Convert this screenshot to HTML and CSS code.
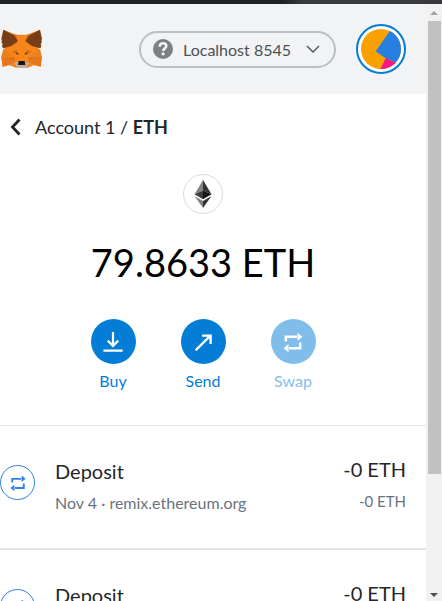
FILE: index.html
```html
<!DOCTYPE html>
<html lang="en">
<head>
<meta charset="utf-8">
<meta name="viewport" content="width=device-width, initial-scale=1">
<title>Account 1 / ETH</title>
<link rel="stylesheet" href="styles.css">
</head>
<body>
<svg class="defs" aria-hidden="true">
  <symbol id="swap" viewBox="0 0 20 20">
    <path d="M2.8 9.5V4.8H14" fill="none" stroke="currentColor" stroke-width="2.4"/>
    <path d="M14.5 .7 19.5 4.8 14.5 8.9z" fill="currentColor"/>
    <path d="M17.2 10.5v5.7H6" fill="none" stroke="currentColor" stroke-width="2.4"/>
    <path d="M5.5 12.1.5 16.2l5 4z" fill="currentColor"/>
  </symbol>
</svg>
<div class="window-edge"></div>
<div class="shell">
  <div class="page">
    <header class="header">
      <svg class="fox" viewBox="3 87 123 120" role="img" aria-label="Wallet logo">
        <path d="M44 104h42l19 22 12 22 8 22-3 30-20-4-20 7H48l-20-7-20 4-4-30 8-22 12-22z" fill="#f6851b"/>
        <path d="m10 89 39 15 5 20zM120 89 81 104l-5 20z" fill="#e2761b"/>
        <path d="m10 89 34 18 10 17-20 14-25 7-3-7 2-6-4-5 2-4-2-7z" fill="#763d16"/>
        <path d="m120 89-34 18-10 17 20 14 25 7 3-7-2-6 4-5-2-4 2-7z" fill="#763d16"/>
        <path d="m10 147-6 25h21l9-8zM120 147l6 25h-21l-9-8z" fill="#e8801f"/>
        <path d="M4 172h24l10 17-30 11zM126 172h-24l-10 17 30 11z" fill="#e4761b"/>
        <path d="m28 172 17-1-3 18zM102 172l-17-1 3 18z" fill="#dc701a"/>
        <path d="m35 155 15-5 7 13zM95 155l-15-5-7 13z" fill="#d96a1b"/>
        <path d="m45 158 9 1 1 6zM85 158l-9 1-1 6z" fill="#233447"/>
        <path d="m41 189 14-4h20l14 4-14 15H55z" fill="#c0ad9e"/>
        <path d="M56 183h18l2 12H54z" fill="#161616"/>
      </svg>
      <div class="header-tools">
        <button class="network" type="button">
          <svg class="network-help" viewBox="0 0 20 20" aria-hidden="true">
            <circle cx="10" cy="10" r="10" fill="#7c8084"/>
            <path d="M6.7 7.7C6.8 5.5 8 4.3 10 4.3s3.3 1.2 3.3 2.8c0 2-3.1 2.2-3.1 4.9" fill="none" stroke="#f2f3f4" stroke-width="2.6"/>
            <circle cx="10.1" cy="14.9" r="1.6" fill="#f2f3f4"/>
          </svg>
          <span>Localhost 8545</span>
          <svg class="network-chevron" viewBox="0 0 14 8" aria-hidden="true"><path d="m1 1 6 6 6-6" fill="none" stroke="#4d5156" stroke-width="1.4"/></svg>
        </button>
        <button class="avatar" type="button" aria-label="Account menu">
          <svg viewBox="0 0 120 120" aria-hidden="true">
            <clipPath id="disc"><circle cx="60" cy="60" r="60"/></clipPath>
            <g clip-path="url(#disc)">
              <path d="M0 0h120v120H0z" fill="#f8a100"/>
              <path d="M91 0 44 67l30 21 46 21V0z" fill="#2580e2"/>
              <path d="m74 88 46 21v20H54z" fill="#fc1683"/>
            </g>
          </svg>
        </button>
      </div>
    </header>
    <nav class="crumbs">
      <button class="back" type="button" aria-label="Back"><svg viewBox="0 0 11 18" aria-hidden="true"><path d="M9.5 1.5 2.5 9l7 7.5" fill="none" stroke="#1f2329" stroke-width="2.8"/></svg></button>
      <span><a href="#account">Account 1</a> / <b>ETH</b></span>
    </nav>
    <main>
      <section class="overview">
        <span class="token">
          <svg viewBox="0 0 18 28" aria-hidden="true">
            <path d="M9 0 .5 14.2 9 10.5z" fill="#828384"/>
            <path d="m9 0 8.5 14.2L9 10.5z" fill="#343434"/>
            <path d="M.5 14.2 9 10.4v8.8z" fill="#3c3c3b"/>
            <path d="M17.5 14.2 9 10.4v8.8z" fill="#141414"/>
            <path d="M.5 16 9 21v7z" fill="#828384"/>
            <path d="M17.5 16 9 21v7z" fill="#343434"/>
          </svg>
        </span>
        <h1 class="balance">79.8633 ETH</h1>
        <div class="actions">
          <button class="action" type="button">
            <span class="action-disc"><svg viewBox="0 0 24 24" aria-hidden="true"><path d="M12 1v15M6.3 10.5 12 16.2l5.7-5.7M1.5 21.5h21" fill="none" stroke="currentColor" stroke-width="2.4"/></svg></span>
            Buy
          </button>
          <button class="action" type="button">
            <span class="action-disc"><svg viewBox="0 0 24 24" aria-hidden="true"><path d="M4 21 20 5M11 5h9.3v9.3" fill="none" stroke="currentColor" stroke-width="2.6"/></svg></span>
            Send
          </button>
          <button class="action" type="button" disabled>
            <span class="action-disc"><svg class="swap-large" aria-hidden="true"><use href="#swap"/></svg></span>
            Swap
          </button>
        </div>
      </section>
      <ul class="activity">
        <li class="entry">
          <span class="entry-icon"><svg aria-hidden="true"><use href="#swap"/></svg></span>
          <div class="entry-info"><h2>Deposit</h2><p>Nov 4 · remix.ethereum.org</p></div>
          <div class="entry-amount"><strong>-0 ETH</strong><span>-0 ETH</span></div>
        </li>
        <li class="entry">
          <span class="entry-icon"><svg aria-hidden="true"><use href="#swap"/></svg></span>
          <div class="entry-info"><h2>Deposit</h2></div>
          <div class="entry-amount"><strong>-0 ETH</strong></div>
        </li>
      </ul>
    </main>
  </div>
  <div class="scrollbar" aria-hidden="true">
    <span class="arrow arrow-up"></span>
    <div class="track"><div class="thumb"></div></div>
    <span class="arrow arrow-down"></span>
  </div>
</div>
</body>
</html>
```

FILE: styles.css
```css
* {
  box-sizing: border-box;
}

body {
  display: flex;
  flex-direction: column;
  height: 100vh;
  margin: 0;
  overflow: hidden;
  background: #fff;
  color: #24272a;
  font-family: Lato, "Liberation Sans", sans-serif;
  font-size: 16px;
}

button {
  padding: 0;
  border: 0;
  background: none;
  color: inherit;
  font: inherit;
}

svg {
  display: block;
}

.defs {
  display: none;
}

.window-edge {
  flex: none;
  height: 4px;
  background: linear-gradient(to right, #202124 64%, #38393d 68%);
}

.shell {
  display: flex;
  flex: 1;
  min-height: 0;
}

.page {
  flex: 1;
  min-width: 0;
  overflow: hidden;
}

.header {
  display: flex;
  align-items: center;
  justify-content: space-between;
  height: 90px;
  padding: 0 20px 0 1px;
  background: #f2f3f4;
}

.fox {
  width: 41px;
  height: 40px;
}

.header-tools {
  display: flex;
  align-items: center;
  gap: 20px;
}

.network {
  display: flex;
  align-items: center;
  gap: 10px;
  height: 37px;
  padding: 0 14px 0 12px;
  border: 2px solid #bbc0c5;
  border-radius: 19px;
  color: #4d5156;
}

.network-help {
  width: 20px;
  height: 20px;
}

.network-chevron {
  width: 14px;
  height: 8px;
  margin-left: 5px;
}

.avatar {
  padding: 3px;
  border: 2px solid #037dd6;
  border-radius: 50%;
  background: #fff;
}

.avatar svg {
  width: 40px;
  height: 40px;
}

.crumbs {
  display: flex;
  align-items: center;
  gap: 14px;
  height: 66px;
  padding-left: 10px;
  font-size: 18px;
}

.crumbs a {
  color: inherit;
  text-decoration: none;
}

.back svg {
  width: 11px;
  height: 18px;
}

.overview {
  display: flex;
  flex-direction: column;
  align-items: center;
  padding: 14px 20px 33px 0;
}

.token {
  display: grid;
  place-items: center;
  width: 40px;
  height: 40px;
  border: 1px solid #d9dbdd;
  border-radius: 50%;
}

.token svg {
  width: 18px;
  height: 28px;
}

.balance {
  margin: 20px 0 28px;
  color: #000;
  font-size: 38px;
  font-weight: 400;
  line-height: 57px;
}

.actions {
  display: flex;
}

.action {
  display: flex;
  flex-direction: column;
  align-items: center;
  gap: 6px;
  width: 90px;
  color: #037dd6;
  line-height: 22px;
}

.action:disabled {
  opacity: 0.5;
}

.action-disc {
  display: grid;
  place-items: center;
  width: 45px;
  height: 45px;
  border-radius: 50%;
  background: #037dd6;
  color: #fff;
}

.action-disc svg {
  width: 22px;
  height: 22px;
}

.action-disc .swap-large {
  width: 20px;
  height: 20px;
}

.activity {
  margin: 0;
  padding: 0;
  border-top: 1px solid #e4e5e6;
  list-style: none;
}

.entry {
  display: grid;
  grid-template-columns: 35px 1fr auto;
  column-gap: 20px;
  height: 124px;
  padding: 29px 20px 0 0;
  border-bottom: 2px solid #e1e2e4;
}

.entry-icon {
  display: grid;
  place-items: center;
  width: 35px;
  height: 35px;
  margin-top: 10px;
  border: 1px solid #2f80ed;
  border-radius: 50%;
  color: #2f80ed;
}

.entry-icon svg {
  width: 16px;
  height: 16px;
}

.entry h2 {
  margin: 0;
  font-size: 20px;
  font-weight: 400;
  line-height: 32px;
}

.entry p {
  margin: 0;
  color: #6a737d;
  line-height: 32px;
}

.entry-amount {
  display: flex;
  flex-direction: column;
  margin-top: -2px;
  text-align: right;
  line-height: 32px;
}

.entry-amount strong {
  font-size: 20px;
  font-weight: 400;
}

.entry-amount span {
  color: #6a737d;
  font-size: 15px;
}

.scrollbar {
  display: flex;
  flex: none;
  flex-direction: column;
  align-items: center;
  width: 16px;
  padding: 7px 0 4px;
  background: #f1f1f1;
}

.arrow {
  border: 4px solid transparent;
}

.arrow-up {
  border-top: 0;
  border-bottom-color: #a3a3a3;
}

.arrow-down {
  border-bottom: 0;
  border-top-color: #505050;
}

.track {
  flex: 1;
  width: 13px;
  margin: 6px 0;
}

.thumb {
  height: 80%;
  background: #c1c1c1;
}
```
